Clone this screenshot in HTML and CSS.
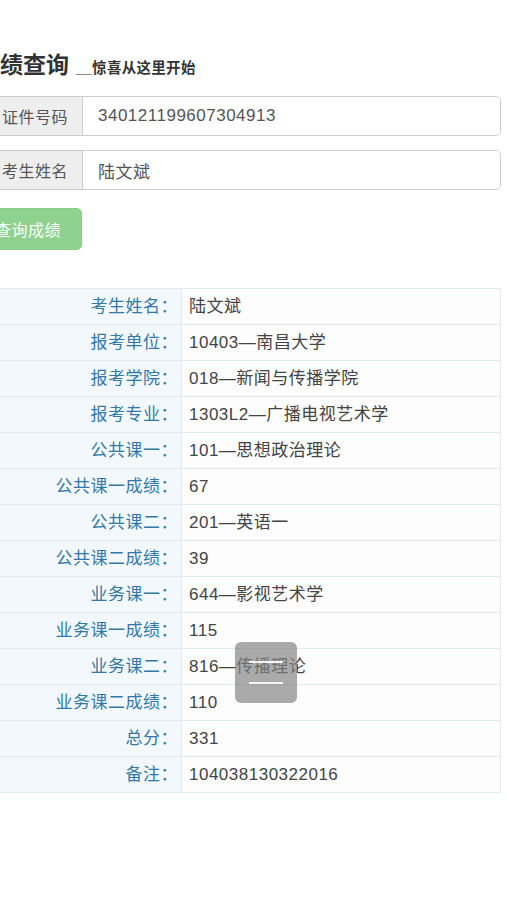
FILE: index.html
```html
<!DOCTYPE html>
<html lang="zh-CN">
<head>
<meta charset="utf-8">
<title>成绩查询</title>
<link rel="stylesheet" href="styles.css">
</head>
<body>
<div class="container">
  <h3 class="title">成绩查询 <small>__惊喜从这里开始</small></h3>
  <div class="input-group">
    <span class="addon">证件号码</span>
    <span class="field">340121199607304913</span>
  </div>
  <div class="input-group">
    <span class="addon">考生姓名</span>
    <span class="field">陆文斌</span>
  </div>
  <button class="btn" disabled>查询成绩</button>
  <table class="result">
    <tr><th>考生姓名：</th><td>陆文斌</td></tr>
    <tr><th>报考单位：</th><td>10403—南昌大学</td></tr>
    <tr><th>报考学院：</th><td>018—新闻与传播学院</td></tr>
    <tr><th>报考专业：</th><td>1303L2—广播电视艺术学</td></tr>
    <tr><th>公共课一：</th><td>101—思想政治理论</td></tr>
    <tr><th>公共课一成绩：</th><td>67</td></tr>
    <tr><th>公共课二：</th><td>201—英语一</td></tr>
    <tr><th>公共课二成绩：</th><td>39</td></tr>
    <tr><th>业务课一：</th><td>644—影视艺术学</td></tr>
    <tr><th>业务课一成绩：</th><td>115</td></tr>
    <tr><th>业务课二：</th><td>816—传播理论</td></tr>
    <tr><th>业务课二成绩：</th><td>110</td></tr>
    <tr><th>总分：</th><td>331</td></tr>
    <tr><th>备注：</th><td>104038130322016</td></tr>
  </table>
</div>
<div class="float-btn"><span class="line"></span><span class="line"></span></div>
</body>
</html>
```

FILE: styles.css
```css
html, body {
  margin: 0;
  padding: 0;
  background: #fff;
}
body {
  font-family: "Liberation Sans", "Noto Sans CJK SC", sans-serif;
  color: #333;
  overflow: hidden;
  width: 507px;
  height: 900px;
  position: relative;
}
.container {
  margin-left: -23px;
  width: 524px;
  padding-top: 50px;
}
.title {
  margin: 0 0 13px 0;
  font-size: 23px;
  font-weight: 600;
  line-height: 30px;
  color: #333;
}
.title small {
  font-size: 14.5px;
  font-weight: 700;
  color: #333;
  letter-spacing: 0.3px;
}
.input-group {
  display: flex;
  height: 40px;
  margin-bottom: 14px;
  border: 1px solid #ccc;
  border-radius: 5px;
  box-sizing: border-box;
  overflow: hidden;
  box-shadow: inset 0 1px 1px rgba(0,0,0,0.05);
}
.addon {
  width: 105px;
  box-sizing: border-box;
  background: #eee;
  border-right: 1px solid #ccc;
  font-size: 16px;
  letter-spacing: 0.5px;
  color: #555;
  display: flex;
  align-items: center;
  justify-content: flex-end;
  padding-right: 14px;
}
.field {
  flex: 1;
  display: flex;
  align-items: center;
  padding-left: 15px;
  font-size: 17px;
  letter-spacing: 0.5px;
  color: #555;
  background: #fff;
}
.btn {
  display: block;
  margin-top: 18px;
  height: 42px;
  width: 105px;
  border: 1px solid #8ccf8c;
  border-radius: 5px;
  background: #8fd18f;
  color: #fff;
  font-family: inherit;
  font-size: 16px;
  letter-spacing: 0.5px;
  padding: 0 0 0 17px;
  text-align: left;
}
.result {
  margin-top: 38px;
  width: 524px;
  border-collapse: collapse;
  border: 1px solid #d5e3ee;
  font-size: 17px;
  letter-spacing: 0.5px;
}
.result tr {
  height: 36px;
}
.result th, .result td {
  border: 1px solid #dfeaf2;
  line-height: 35px;
}
.result th {
  width: 204px;
  box-sizing: border-box;
  padding: 0 3px 0 0;
  text-align: right;
  font-weight: normal;
  color: #3378a6;
  background: #f2f8fc;
}
.result td {
  color: #444;
  background: #fdfdfd;
  padding: 0 0 0 7px;
}
.float-btn {
  position: absolute;
  left: 235px;
  top: 642px;
  width: 62px;
  height: 61px;
  border-radius: 6px;
  background: rgba(130, 130, 130, 0.68);
  display: flex;
  flex-direction: column;
  align-items: center;
  justify-content: center;
  gap: 19px;
}
.float-btn .line {
  display: block;
  width: 34px;
  height: 2px;
  background: #f4f4f4;
}
```
